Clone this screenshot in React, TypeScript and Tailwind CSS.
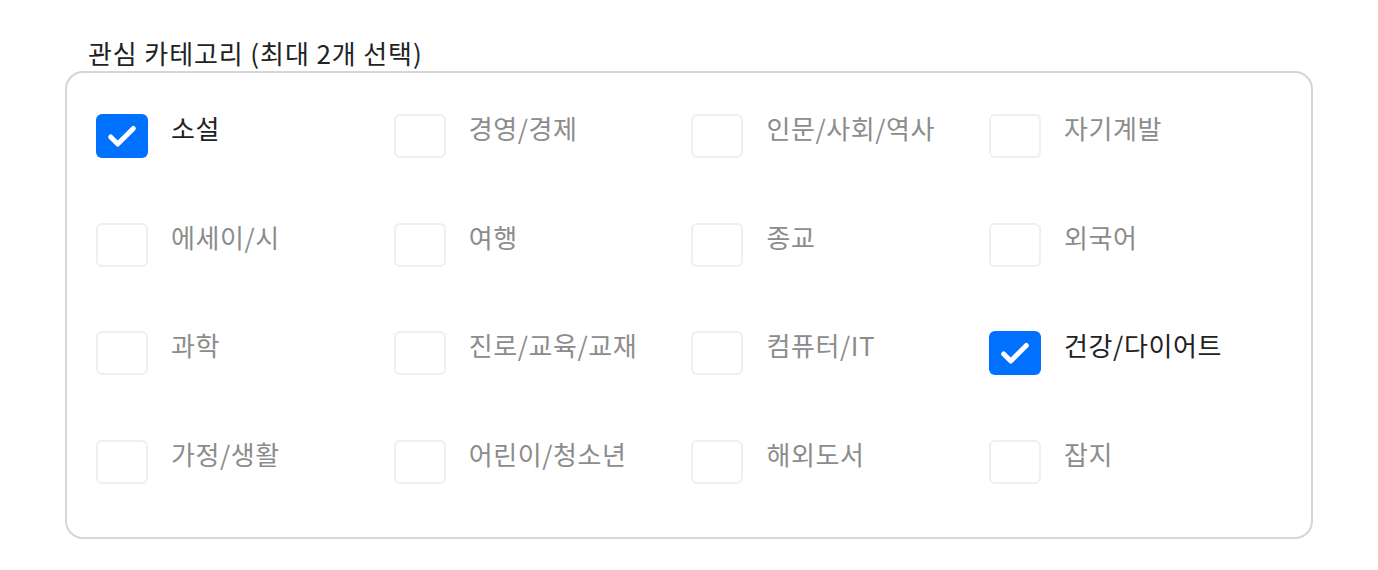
import { Check } from "lucide-react";

const categories = [
  "소설",
  "경영/경제",
  "인문/사회/역사",
  "자기계발",
  "에세이/시",
  "여행",
  "종교",
  "외국어",
  "과학",
  "진로/교육/교재",
  "컴퓨터/IT",
  "건강/다이어트",
  "가정/생활",
  "어린이/청소년",
  "해외도서",
  "잡지",
];

const selected = ["소설", "건강/다이어트"];

export default function App() {
  return (
    <div
      className="min-h-[570px] bg-white pl-[65px] pt-[36px]"
      style={{ fontFamily: '"Noto Sans CJK KR", "Noto Sans", sans-serif' }}
    >
      <p className="ml-[23px] text-[26px] leading-[34px] tracking-[0.9px] text-[#222222]">
        관심 카테고리 (최대 2개 선택)
      </p>
      <div className="mt-[1px] w-[1248px] rounded-[18px] border-2 border-[#d6d6d6] pb-[53px] pl-[29px] pt-[41px]">
        <div className="grid grid-cols-[repeat(4,297.7px)] gap-y-[64.66px]">
          {categories.map((c) => {
            const on = selected.includes(c);
            return (
              <label key={c} className="flex items-start gap-[23px]">
                {on ? (
                  <span className="flex h-[44px] w-[52px] shrink-0 items-center justify-center rounded-[6px] bg-[#0070ff]">
                    <Check className="mt-[2px] h-[34px] w-[34px] text-white" strokeWidth={3.5} />
                  </span>
                ) : (
                  <span className="h-[44px] w-[52px] shrink-0 rounded-[6px] border-2 border-[#efefef] bg-white" />
                )}
                <span
                  className={`-mt-[1px] text-[26px] leading-[30px] tracking-[0.6px] ${on ? "text-[#222222]" : "text-[#8c8c8c]"}`}
                >
                  {c}
                </span>
              </label>
            );
          })}
        </div>
      </div>
    </div>
  );
}
